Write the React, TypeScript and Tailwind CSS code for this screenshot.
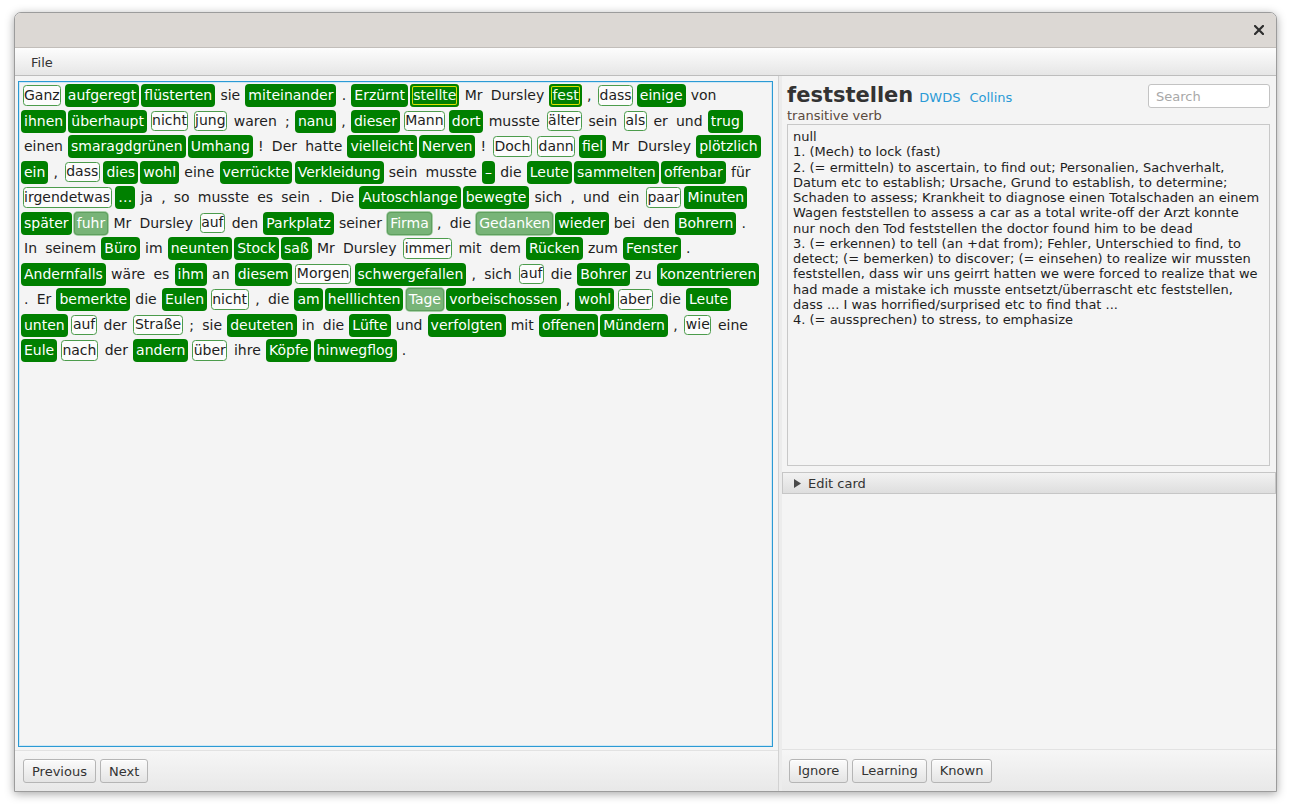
import React from "react";

const rows: string[] = [
  "O:Ganz G:aufgeregt G:flüsterten T:sie G:miteinander T:. G:Erzürnt Y:stellte T:Mr T:Dursley Y:fest T:, O:dass G:einige T:von",
  "G:ihnen G:überhaupt O:nicht O:jung T:waren T:; G:nanu T:, G:dieser O:Mann G:dort T:musste O:älter T:sein O:als T:er T:und G:trug",
  "T:einen G:smaragdgrünen G:Umhang T:! T:Der T:hatte G:vielleicht G:Nerven T:! O:Doch O:dann G:fiel T:Mr T:Dursley G:plötzlich",
  "G:ein T:, O:dass G:dies G:wohl T:eine G:verrückte G:Verkleidung T:sein T:musste G:– T:die G:Leute G:sammelten G:offenbar T:für",
  "O:irgendetwas G:… T:ja T:, T:so T:musste T:es T:sein T:. T:Die G:Autoschlange G:bewegte T:sich T:, T:und T:ein O:paar G:Minuten",
  "G:später L:fuhr T:Mr T:Dursley O:auf T:den G:Parkplatz T:seiner L:Firma T:, T:die L:Gedanken G:wieder T:bei T:den G:Bohrern T:.",
  "T:In T:seinem G:Büro T:im G:neunten G:Stock G:saß T:Mr T:Dursley O:immer T:mit T:dem G:Rücken T:zum G:Fenster T:.",
  "G:Andernfalls T:wäre T:es G:ihm T:an G:diesem O:Morgen G:schwergefallen T:, T:sich O:auf T:die G:Bohrer T:zu G:konzentrieren",
  "T:. T:Er G:bemerkte T:die G:Eulen O:nicht T:, T:die G:am G:helllichten L:Tage G:vorbeischossen T:, G:wohl O:aber T:die G:Leute",
  "G:unten O:auf T:der O:Straße T:; T:sie G:deuteten T:in T:die G:Lüfte T:und G:verfolgten T:mit G:offenen G:Mündern T:, O:wie T:eine",
  "G:Eule O:nach T:der G:andern O:über T:ihre G:Köpfe G:hinwegflog T:.",
];

const defLines = [
  "null",
  "1. (Mech) to lock (fast)",
  "2. (= ermitteln) to ascertain, to find out; Personalien, Sachverhalt,",
  "Datum etc to establish; Ursache, Grund to establish, to determine;",
  "Schaden to assess; Krankheit to diagnose einen Totalschaden an einem",
  "Wagen feststellen to assess a car as a total write-off der Arzt konnte",
  "nur noch den Tod feststellen the doctor found him to be dead",
  "3. (= erkennen) to tell (an +dat from); Fehler, Unterschied to find, to",
  "detect; (= bemerken) to discover; (= einsehen) to realize wir mussten",
  "feststellen, dass wir uns geirrt hatten we were forced to realize that we",
  "had made a mistake ich musste entsetzt/überrascht etc feststellen,",
  "dass ... I was horrified/surprised etc to find that ...",
  "4. (= aussprechen) to stress, to emphasize",
];

function Tok({ k, w }: { k: string; w: string }) {
  const base = "h-[23px] px-[3px] flex items-center rounded-[4px] whitespace-nowrap shrink-0";
  if (k === "G") return <span className={base + " bg-[#008000] text-white"}>{w}</span>;
  if (k === "O")
    return (
      <span className="h-[23px] px-[1.5px] pt-[1px] pb-[1.5px] flex shrink-0 whitespace-nowrap">
        <span className="h-full flex items-center px-[0.5px] border border-[#4c9c4c] rounded-[3.5px] bg-[#fcfcfc] text-[#1e1e1e]">
          {w}
        </span>
      </span>
    );
  if (k === "L")
    return (
      <span className={base + " bg-[#78b478] text-white shadow-[inset_0_0_0_1px_#5f9f5f] ring-1 ring-[#a8d0a8]"}>
        {w}
      </span>
    );
  if (k === "Y")
    return (
      <span className={base + " bg-[#008000] text-[#f0fff0] shadow-[inset_0_0_0_2px_#008000,inset_0_0_0_3px_#dde000]"}>
        {w}
      </span>
    );
  return <span className={base + " text-[#1e1e1e]"}>{w}</span>;
}

function Btn({ children }: { children: React.ReactNode }) {
  return (
    <button className="h-[24px] px-[8px] rounded-[3px] border border-[#b5b5b5] bg-gradient-to-b from-[#fbfbfb] to-[#e4e4e4] text-[13px] text-[#333] leading-none shadow-[inset_0_1px_0_#ffffff]">
      {children}
    </button>
  );
}

export default function App() {
  return (
    <div className="w-[1291px] h-[809px] bg-white pt-[12px] pl-[14px] overflow-hidden" style={{ fontFamily: '"DejaVu Sans", sans-serif' }}>
      <div className="w-[1263px] h-[780px] flex flex-col rounded-t-[7px] border border-[#9c9c9c] bg-[#f4f4f4] shadow-[0_2px_10px_rgba(0,0,0,0.35)] overflow-hidden">
        {/* title bar */}
        <div className="h-[35px] bg-[#dcd8d4] border-b border-[#c2beba] flex items-center justify-end pr-[12px] shrink-0">
          <svg width="10" height="10" viewBox="0 0 10 10">
            <path d="M1 1 L9 9 M9 1 L1 9" stroke="#2e2e2e" strokeWidth="2.2" strokeLinecap="square" />
          </svg>
        </div>
        {/* menu bar */}
        <div className="h-[28px] bg-gradient-to-b from-[#fdfdfd] to-[#e6e6e6] border-b border-[#bdbdbd] flex items-center pl-[16px] pt-[3px] text-[13px] text-[#333] shrink-0">
          File
        </div>
        {/* main */}
        <div className="flex-1 flex min-h-0">
          {/* left pane */}
          <div className="w-[763px] flex flex-col shrink-0">
            <div className="ml-[3px] mt-[5px] w-[755px] h-[666px] border border-[#2b9ad4] bg-[#f4f4f4] shadow-[inset_0_0_0_1px_#cfe8f5] pl-[2px] pt-[2px] shrink-0">
              <div className="flex flex-col gap-[2.5px] text-[14px]">
                {rows.map((r, i) => (
                  <div key={i} className="flex gap-[2.2px]">
                    {r.split(" ").map((t, j) => {
                      const idx = t.indexOf(":");
                      return <Tok key={j} k={t.slice(0, idx)} w={t.slice(idx + 1)} />;
                    })}
                  </div>
                ))}
              </div>
            </div>
            <div className="flex-1 mt-[3px] flex items-center gap-[4px] pl-[8px] border-t border-[#e2e2e2] bg-gradient-to-b from-[#f6f6f6] to-[#e8e8e8]">
              <Btn>Previous</Btn>
              <Btn>Next</Btn>
            </div>
          </div>
          {/* divider */}
          <div className="w-[4px] shrink-0 bg-[#ececec] border-l border-[#d2d2d2]" />
          {/* right pane */}
          <div className="flex-1 flex flex-col min-w-0">
            <div className="pl-[5px] pr-[6px] pt-[8px] flex flex-col">
              <div className="h-[24px] flex items-center justify-between">
                <div className="flex items-baseline gap-[6px]">
                  <span className="text-[21px] font-bold text-[#333] leading-none">feststellen</span>
                  <span className="text-[13px] text-[#2a9ad6]">DWDS</span>
                  <span className="text-[13px] text-[#2a9ad6] ml-[3px]">Collins</span>
                </div>
                <div className="w-[122px] h-[24px] rounded-[3px] border border-[#c3c3c3] bg-white flex items-center pl-[7px] pt-[1px] text-[13px] text-[#a8a8a8]">
                  Search
                </div>
              </div>
              <div className="h-[16px] flex items-center text-[13px] text-[#5a4a3e]">transitive verb</div>
              <div className="h-[342px] border border-[#c8c8c8] bg-[#f4f4f4] pl-[5px] pt-[4px] text-[13px] text-[#1e1e1e] leading-[15.25px]">
                {defLines.map((l, i) => (
                  <div key={i} className="whitespace-nowrap">{l}</div>
                ))}
              </div>
            </div>
            <div className="mt-[6px] h-[22px] border border-[#c6c6c6] bg-gradient-to-b from-[#f2f2f2] to-[#dedede] flex items-center pl-[11px] pt-[1px] gap-[7px] text-[13px] text-[#333]">
              <svg width="7" height="9" viewBox="0 0 7 9">
                <path d="M0 0 L7 4.5 L0 9 Z" fill="#4a4a4a" />
              </svg>
              Edit card
            </div>
            <div className="flex-1" />
            <div className="h-[42px] flex items-center gap-[4px] pl-[7px] border-t border-[#e2e2e2] bg-gradient-to-b from-[#f6f6f6] to-[#e8e8e8]">
              <Btn>Ignore</Btn>
              <Btn>Learning</Btn>
              <Btn>Known</Btn>
            </div>
          </div>
        </div>
      </div>
    </div>
  );
}
